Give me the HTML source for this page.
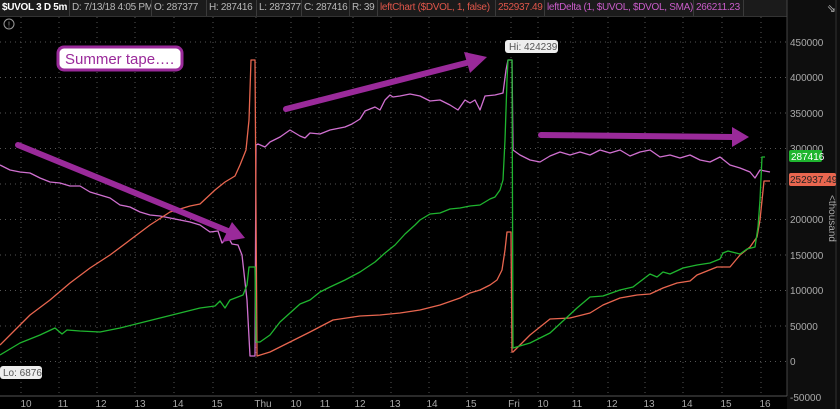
<!DOCTYPE html>
<html><head><meta charset="utf-8"><style>
body{margin:0;width:840px;height:409px;overflow:hidden;background:#000;font-family:"Liberation Sans",sans-serif;}
#hdr{position:absolute;left:0;top:0;height:16px;width:787px;background:#1b1b1b;display:flex;font-size:10px;letter-spacing:-0.3px;line-height:15px;color:#b8b8b8;border-bottom:1px solid #333}
#hdr div{border-right:1px solid #3a3a3a;padding:0 2px;white-space:nowrap;box-sizing:border-box;overflow:hidden}
</style></head><body>
<div id="hdr">
<div style="width:70px;color:#fff;font-weight:bold">$UVOL 3 D 5m</div>
<div style="width:82px">D: 7/13/18 4:05 PM</div>
<div style="width:55px">O: 287377</div>
<div style="width:50px">H: 287416</div>
<div style="width:45px">L: 287377</div>
<div style="width:48px">C: 287416</div>
<div style="width:28px">R: 39</div>
<div style="width:118px;color:#e0564a">leftChart ($DVOL, 1, false)</div>
<div style="width:49px;color:#e0564a">252937.49</div>
<div style="width:149px;color:#c95cc9">leftDelta (1, $UVOL, $DVOL, SMA)</div>
<div style="width:50px;color:#c95cc9">266211.23</div>
</div>
<svg width="840" height="409" style="position:absolute;left:0;top:0" font-family="Liberation Sans, sans-serif">
<rect x="787" y="0" width="53" height="409" fill="#0e0e0e"/>
<line x1="787" y1="0" x2="787" y2="396" stroke="#444"/>
<line x1="836" y1="0" x2="836" y2="409" stroke="#333"/>
<text x="0" y="0" transform="translate(828,4) rotate(90)" font-size="11" fill="#bbb">⇗</text>
<g stroke="#555" stroke-dasharray="1 4" stroke-width="1">
<line x1="0" y1="42" x2="787" y2="42"/><line x1="0" y1="77.5" x2="787" y2="77.5"/><line x1="0" y1="113" x2="787" y2="113"/><line x1="0" y1="148.5" x2="787" y2="148.5"/><line x1="0" y1="184" x2="787" y2="184"/><line x1="0" y1="219.5" x2="787" y2="219.5"/><line x1="0" y1="255" x2="787" y2="255"/><line x1="0" y1="290.5" x2="787" y2="290.5"/><line x1="0" y1="326" x2="787" y2="326"/><line x1="0" y1="361.5" x2="787" y2="361.5"/>
<line x1="21" y1="17" x2="21" y2="396"/><line x1="59" y1="17" x2="59" y2="396"/><line x1="97" y1="17" x2="97" y2="396"/><line x1="135" y1="17" x2="135" y2="396"/><line x1="174" y1="17" x2="174" y2="396"/><line x1="213" y1="17" x2="213" y2="396"/><line x1="256" y1="17" x2="256" y2="396"/><line x1="291" y1="17" x2="291" y2="396"/><line x1="319" y1="17" x2="319" y2="396"/><line x1="353" y1="17" x2="353" y2="396"/><line x1="391" y1="17" x2="391" y2="396"/><line x1="429" y1="17" x2="429" y2="396"/><line x1="467" y1="17" x2="467" y2="396"/><line x1="511" y1="17" x2="511" y2="396"/><line x1="538" y1="17" x2="538" y2="396"/><line x1="573" y1="17" x2="573" y2="396"/><line x1="608" y1="17" x2="608" y2="396"/><line x1="645" y1="17" x2="645" y2="396"/><line x1="683" y1="17" x2="683" y2="396"/><line x1="722" y1="17" x2="722" y2="396"/><line x1="761" y1="17" x2="761" y2="396"/>
</g>
<line x1="0" y1="396" x2="787" y2="396" stroke="#555"/>
<g font-size="10" fill="#aaa" text-anchor="middle">
<text x="26" y="407">10</text><text x="63" y="407">11</text><text x="101" y="407">12</text><text x="140" y="407">13</text><text x="178" y="407">14</text><text x="217" y="407">15</text><text x="263" y="407">Thu</text><text x="296" y="407">10</text><text x="325" y="407">11</text><text x="360" y="407">12</text><text x="395" y="407">13</text><text x="432" y="407">14</text><text x="471" y="407">15</text><text x="514" y="407">Fri</text><text x="543" y="407">10</text><text x="577" y="407">11</text><text x="612" y="407">12</text><text x="649" y="407">13</text><text x="687" y="407">14</text><text x="726" y="407">15</text><text x="765" y="407">16</text>
</g>
<g font-size="10" fill="#aaa">
<text x="790" y="46">450000</text><text x="790" y="81">400000</text><text x="790" y="117">350000</text><text x="790" y="152">300000</text><text x="790" y="223">200000</text><text x="790" y="259">150000</text><text x="790" y="294">100000</text><text x="790" y="330">50000</text><text x="790" y="365">0</text><text x="790" y="401">-50000</text>
</g>
<text transform="translate(829,195) rotate(90)" font-size="10" fill="#aaa">&lt;thousand</text>
<circle cx="9" cy="24" r="5" fill="none" stroke="#999"/><text x="9" y="27.5" font-size="8" fill="#999" text-anchor="middle">!</text>
<g fill="none" stroke-width="1.3" stroke-linejoin="round">
<polyline stroke="#d070d0" points="0,165 10,170 20,172 30,173 40,178 50,182 60,183 70,186 80,186 90,192 100,195 110,198 120,205 130,207 140,212 150,215 160,216 170,218 180,220 190,222 200,225 210,232 218,231 222,243 228,237 232,244 238,245 242,255 247,300 250,356 255,356 256,145 258,144 265,147 270,142 280,137 290,130 300,136 305,138 310,133 320,134 330,130 345,127 352,124 360,119 365,111 375,107 380,110 385,100 390,95 393,97 400,96 410,94 420,96 430,101 440,100 450,105 458,110 465,100 470,103 475,100 480,110 485,96 495,95 503,93 506,70 508,60 512,60 513,150 520,155 530,160 540,162 550,156 560,152 570,155 580,152 590,155 600,150 610,153 620,150 630,156 640,152 650,150 660,157 670,155 680,158 690,155 700,160 710,162 720,157 730,165 740,168 750,172 755,178 760,170 770,172"/>
<polyline stroke="#e8664f" points="0,345 15,330 30,315 50,300 70,283 90,268 110,255 130,240 150,225 170,212 190,206 200,204 215,190 225,182 235,176 240,165 246,150 249,120 251,60 255,60 257,356 270,352 290,342 310,332 333,320 360,316 380,315 400,313 420,310 440,305 460,298 470,293 480,290 490,285 497,280 502,270 505,250 507,232 511,232 512,352 513,352 530,335 550,319 570,318 590,313 603,305 620,298 637,295 650,294 663,288 677,283 690,281 697,275 717,267 730,267 740,255 750,247 757,237 760,220 764,181 770,181"/>
<polyline stroke="#1fb52f" points="0,355 20,343 40,335 55,328 62,334 67,330 80,331 100,332 120,328 140,323 160,318 180,313 200,308 215,306 220,301 225,308 230,300 243,295 247,285 249,267 255,267 256,342 260,342 270,335 280,322 290,313 300,304 310,300 320,292 330,287 345,280 360,272 375,262 385,253 395,245 405,234 415,225 420,220 430,214 440,213 450,209 460,208 470,206 480,205 490,199 495,197 500,190 503,180 505,140 507,80 508,60 512,60 513,348 530,343 550,333 577,308 590,297 603,296 620,290 633,287 650,274 657,277 663,272 670,274 683,268 697,265 710,263 720,259 723,253 728,251 740,254 747,249 755,247 758,227 760,200 762,157 765,157"/>
</g>
<g stroke="#9a2a9a" stroke-width="6" stroke-linecap="round" fill="#9a2a9a">
<line x1="18" y1="145" x2="228" y2="231"/><polygon stroke="none" points="245,238 222,242 232,222"/>
<line x1="286" y1="109" x2="470" y2="62"/><polygon stroke="none" points="487,57 464,52 470,73"/>
<line x1="541" y1="135" x2="733" y2="137"/><polygon stroke="none" points="749,137 732,127 732,147"/>
</g>
<rect x="58" y="47" width="124" height="23" rx="6" fill="#fff" stroke="#9a2a9a" stroke-width="3"/>
<text x="65" y="64" font-size="15" fill="#9a2a9a">Summer tape….</text>
<rect x="505" y="40" width="53" height="13" rx="3" fill="#eee"/>
<text x="509" y="50" font-size="10" fill="#555">Hi: 424239</text>
<rect x="0" y="366" width="42" height="13" rx="3" fill="#eee"/>
<text x="3" y="376" font-size="10" fill="#555">Lo: 6876</text>
<rect x="789" y="150" width="33" height="12" rx="2" fill="#1fb52f"/>
<text x="791" y="160" font-size="10" fill="#fff">287416</text>
<rect x="789" y="173" width="47" height="13" rx="2" fill="#e8664f"/>
<text x="790" y="183" font-size="10" fill="#222">252937.49</text>
</svg>
</body></html>
